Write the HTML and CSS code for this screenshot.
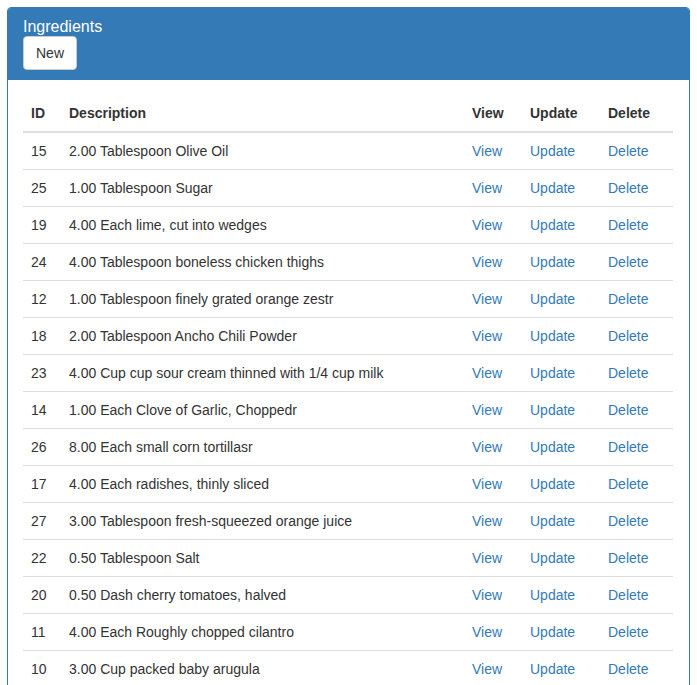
FILE: index.html
```html
<!DOCTYPE html>
<html>
<head>
<meta charset="utf-8">
<link rel="stylesheet" href="styles.css">
</head>
<body>
<div class="panel">
  <div class="panel-heading">
    <div class="panel-title">Ingredients</div>
    <button class="btn">New</button>
  </div>
  <div class="panel-body">
    <table class="table">
      <colgroup>
        <col class="c-id"><col class="c-desc"><col class="c-view"><col class="c-upd"><col class="c-del">
      </colgroup>
      <thead>
        <tr><th>ID</th><th>Description</th><th>View</th><th>Update</th><th>Delete</th></tr>
      </thead>
      <tbody>
        <tr><td>15</td><td>2.00 Tablespoon Olive Oil</td><td><a href="#">View</a></td><td><a href="#">Update</a></td><td><a href="#">Delete</a></td></tr>
        <tr><td>25</td><td>1.00 Tablespoon Sugar</td><td><a href="#">View</a></td><td><a href="#">Update</a></td><td><a href="#">Delete</a></td></tr>
        <tr><td>19</td><td>4.00 Each lime, cut into wedges</td><td><a href="#">View</a></td><td><a href="#">Update</a></td><td><a href="#">Delete</a></td></tr>
        <tr><td>24</td><td>4.00 Tablespoon boneless chicken thighs</td><td><a href="#">View</a></td><td><a href="#">Update</a></td><td><a href="#">Delete</a></td></tr>
        <tr><td>12</td><td>1.00 Tablespoon finely grated orange zestr</td><td><a href="#">View</a></td><td><a href="#">Update</a></td><td><a href="#">Delete</a></td></tr>
        <tr><td>18</td><td>2.00 Tablespoon Ancho Chili Powder</td><td><a href="#">View</a></td><td><a href="#">Update</a></td><td><a href="#">Delete</a></td></tr>
        <tr><td>23</td><td>4.00 Cup cup sour cream thinned with 1/4 cup milk</td><td><a href="#">View</a></td><td><a href="#">Update</a></td><td><a href="#">Delete</a></td></tr>
        <tr><td>14</td><td>1.00 Each Clove of Garlic, Choppedr</td><td><a href="#">View</a></td><td><a href="#">Update</a></td><td><a href="#">Delete</a></td></tr>
        <tr><td>26</td><td>8.00 Each small corn tortillasr</td><td><a href="#">View</a></td><td><a href="#">Update</a></td><td><a href="#">Delete</a></td></tr>
        <tr><td>17</td><td>4.00 Each radishes, thinly sliced</td><td><a href="#">View</a></td><td><a href="#">Update</a></td><td><a href="#">Delete</a></td></tr>
        <tr><td>27</td><td>3.00 Tablespoon fresh-squeezed orange juice</td><td><a href="#">View</a></td><td><a href="#">Update</a></td><td><a href="#">Delete</a></td></tr>
        <tr><td>22</td><td>0.50 Tablespoon Salt</td><td><a href="#">View</a></td><td><a href="#">Update</a></td><td><a href="#">Delete</a></td></tr>
        <tr><td>20</td><td>0.50 Dash cherry tomatoes, halved</td><td><a href="#">View</a></td><td><a href="#">Update</a></td><td><a href="#">Delete</a></td></tr>
        <tr><td>11</td><td>4.00 Each Roughly chopped cilantro</td><td><a href="#">View</a></td><td><a href="#">Update</a></td><td><a href="#">Delete</a></td></tr>
        <tr><td>10</td><td>3.00 Cup packed baby arugula</td><td><a href="#">View</a></td><td><a href="#">Update</a></td><td><a href="#">Delete</a></td></tr>
      </tbody>
    </table>
  </div>
</div>
</body>
</html>
```

FILE: styles.css
```css
* { box-sizing: border-box; }
html, body { margin: 0; padding: 0; }
body {
  padding: 7px 7px 0 7px;
  font-family: "Liberation Sans", Arial, sans-serif;
  font-size: 14px;
  line-height: 20px;
  color: #333;
  background: #fff;
}
.panel {
  border: 1px solid #337ab7;
  border-radius: 4px;
  background: #fff;
}
.panel-heading {
  background: #337ab7;
  color: #fff;
  padding: 10px 15px;
  border-radius: 3px 3px 0 0;
}
.panel-title {
  font-size: 16px;
  line-height: 1.1;
}
.btn {
  display: inline-block;
  font-family: inherit;
  font-size: 14px;
  line-height: 20px;
  padding: 6px 12px;
  color: #333;
  background: #fff;
  border: 1px solid #ccc;
  border-radius: 4px;
  margin: 0;
  vertical-align: top;
}
.panel-body { padding: 15px 16px 15px 15px; }
.table {
  width: 100%;
  border-collapse: collapse;
  border-spacing: 0;
  table-layout: fixed;
}
.c-id { width: 38px; }
.c-view { width: 58px; }
.c-upd { width: 78px; }
.c-del { width: 73px; }
.table th, .table td {
  padding: 8px;
  text-align: left;
  vertical-align: top;
  white-space: nowrap;
}
.table th {
  font-weight: bold;
  border-bottom: 2px solid #ddd;
}
.table td { border-top: 1px solid #ddd; }
.table tbody tr:first-child td { border-top: 0; }
a { color: #337ab7; text-decoration: none; }
```
